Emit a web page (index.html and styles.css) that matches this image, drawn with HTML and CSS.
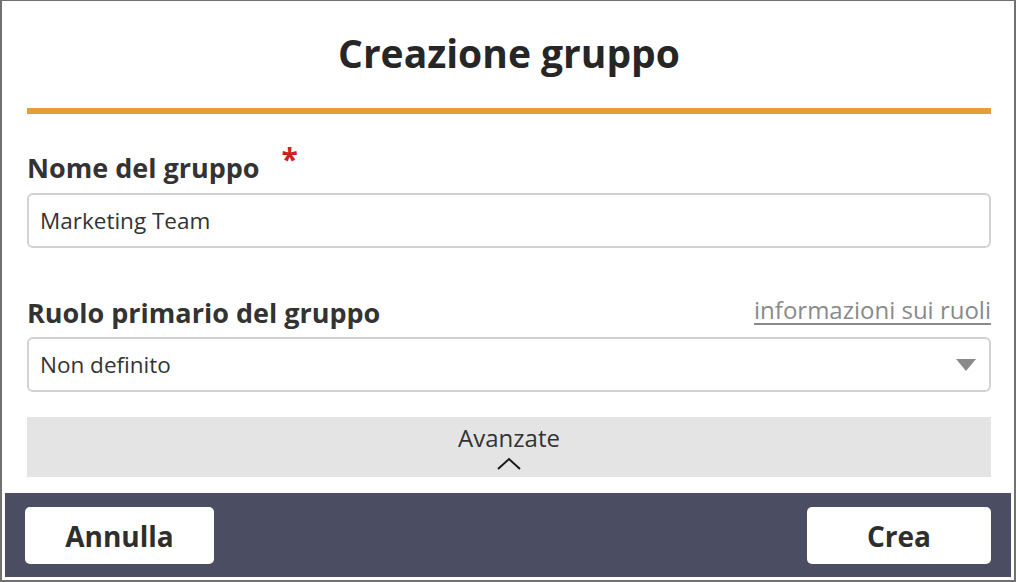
FILE: index.html
```html
<!DOCTYPE html>
<html lang="it">
<head>
    <meta charset="UTF-8">
    <meta name="viewport" content="width=device-width, initial-scale=1.0">
    <title>Creazione gruppo</title>
    <link rel="stylesheet" href="styles.css">
</head>
<body>
    <div class="dialog">
        <div class="content">
            <h1 class="title">Creazione gruppo</h1>
            <div class="rule"></div>

            <div class="field">
                <div class="label-row">
                    <label class="label" for="name">Nome del gruppo</label>
                    <span class="required">*</span>
                </div>
                <input type="text" class="input" id="name" value="Marketing Team">
            </div>

            <div class="field field-role">
                <div class="label-row">
                    <label class="label" for="role">Ruolo primario del gruppo</label>
                    <a href="#" class="info-link">informazioni sui ruoli</a>
                </div>
                <div class="select" id="role">
                    <span>Non definito</span>
                    <svg class="select-arrow" width="20" height="12" viewBox="0 0 20 12">
                        <polygon points="0,0 20,0 10,12" fill="#8a8a8a"/>
                    </svg>
                </div>
            </div>

            <div class="advanced">
                <span>Avanzate</span>
                <svg class="chevron" width="26" height="14" viewBox="0 0 26 14">
                    <polyline points="2,12 13,2 24,12" fill="none" stroke="#1a1a1a" stroke-width="2"/>
                </svg>
            </div>
        </div>

        <div class="footer">
            <button class="btn btn-cancel">Annulla</button>
            <button class="btn btn-create">Crea</button>
        </div>
    </div>
</body>
</html>
```

FILE: styles.css
```css
* {
    margin: 0;
    padding: 0;
    box-sizing: border-box;
    font-family: "Open Sans", "Liberation Sans", sans-serif;
}
body {
    background: #ffffff;
}
.dialog {
    width: 1016px;
    height: 582px;
    border: 2px solid #717171;
    border-top-width: 1px;
    padding: 0 3px 3px 3px;
    display: flex;
    flex-direction: column;
    background: #ffffff;
}
.content {
    flex: 1;
    padding: 0 20px 0 22px;
}
.title {
    font-size: 39px;
    font-weight: 700;
    color: #262626;
    text-align: center;
    line-height: 50px;
    padding-top: 27px;
    height: 107px;
}
.rule {
    height: 6px;
    background: #e89e38;
}
.field {
    margin-top: 36px;
}
.field-role {
    margin-top: 47px;
}
.label-row {
    display: flex;
    align-items: flex-end;
    height: 36px;
}
.label {
    font-size: 27px;
    font-weight: 700;
    color: #333333;
    line-height: 36px;
}
.required {
    color: #d0201a;
    font-size: 30px;
    font-weight: 700;
    margin-left: 22px;
    margin-top: -4px;
    align-self: flex-start;
    line-height: 26px;
}
.info-link {
    margin-left: auto;
    margin-bottom: 5px;
    font-size: 24px;
    color: #8a8a8a;
    text-decoration: underline;
    text-underline-offset: 4px;
    line-height: 32px;
}
.input, .select {
    width: 100%;
    height: 55px;
    border: 2px solid #d2d2d2;
    border-radius: 6px;
    padding: 0 11px;
    font-size: 22.5px;
    color: #333333;
    background: #ffffff;
}
.input {
    margin-top: 7px;
    outline: none;
}
.select {
    margin-top: 6px;
    display: flex;
    align-items: center;
    justify-content: space-between;
}
.select-arrow {
    margin-right: 2px;
}
.advanced {
    margin-top: 25px;
    height: 60px;
    background: #e4e4e4;
    display: flex;
    flex-direction: column;
    align-items: center;
    padding-top: 7px;
    font-size: 24px;
    color: #333333;
    line-height: 28px;
}
.chevron {
    margin-top: 5px;
}
.footer {
    height: 84px;
    background: #4b4d62;
    display: flex;
    justify-content: space-between;
    align-items: center;
    padding: 0 20px;
}
.btn {
    height: 57px;
    padding-top: 2px;
    border: none;
    border-radius: 5px;
    background: #ffffff;
    color: #2e2e2e;
    font-size: 28px;
    font-weight: 700;
    cursor: pointer;
}
.btn-cancel {
    width: 189px;
}
.btn-create {
    width: 184px;
}
```
